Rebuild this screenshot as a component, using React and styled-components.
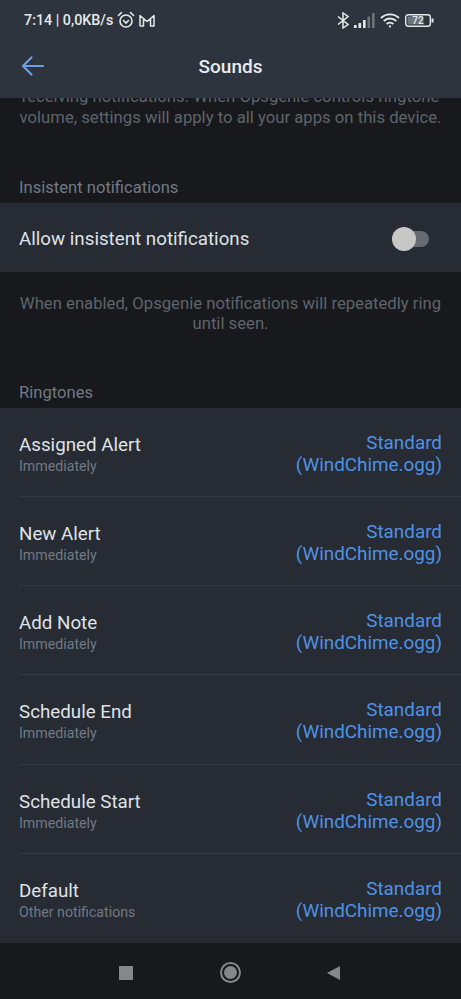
import React from "react"
import styled, { createGlobalStyle } from 'styled-components'

const Global = createGlobalStyle`
html,body{
  margin:0;
  padding:0;
  background:#17191d;
}
*{box-sizing:border-box;}
`

const Screen = styled.div`
width:461px;
height:999px;
display:flex;
flex-direction:column;
overflow:hidden;
font-family:Roboto,"Liberation Sans",sans-serif;
background:#17191d;
`

const Header = styled.header`
height:98px;
flex:none;
background:#2e343d;
display:flex;
flex-direction:column;
position:relative;
z-index:2;
`

const StatusBar = styled.div`
height:40px;
flex:none;
padding:0 27px 0 24px;
display:flex;
align-items:center;
justify-content:space-between;
color:#e6e8ea;
font-size:14.3px;
font-weight:500;
`

const StatusGroup = styled.div`
display:flex;
align-items:center;
gap:${props => props.gap || 4}px;
`

const TitleBar = styled.div`
flex:1;
display:flex;
align-items:center;
padding:0 21px 6px;
position:relative;
`

const Title = styled.div`
position:absolute;
left:0;
right:0;
text-align:center;
color:#e9ebee;
font-size:19px;
font-weight:500;
`

const Content = styled.main`
flex:1;
min-height:0;
overflow:hidden;
display:flex;
flex-direction:column;
`

const Hint = styled.p`
flex:none;
margin:${props => props.top}px 0 0;
padding:0 19px;
text-align:center;
color:#5f646b;
font-size:16.7px;
line-height:${props => props.lh || 20}px;
`

const SectionLabel = styled.div`
flex:none;
margin-top:${props => props.top}px;
height:32px;
padding:0 19px 6px;
display:flex;
align-items:flex-end;
color:#717985;
font-size:16.6px;
`

const Card = styled.section`
flex:none;
background:#272b33;
`

const ToggleRow = styled.div`
height:69px;
padding:3px 32px 0 19px;
display:flex;
align-items:center;
justify-content:space-between;
color:#dfe2e6;
font-size:18.75px;
`

const Switch = styled.div`
width:37px;
height:16px;
border-radius:8px;
background:#666b73;
position:relative;
`

const Thumb = styled.div`
width:24px;
height:24px;
border-radius:50%;
background:#c7c7c5;
position:absolute;
left:0;
top:-4px;
`

const RingRow = styled.div`
height:89.17px;
margin-left:19px;
padding:0 19px 0 0;
display:flex;
justify-content:space-between;
align-items:flex-start;
border-bottom:${props => props.last ? 'none' : '1px solid #343840'};
`

const RingName = styled.div`
padding-top:25px;
`

const Name = styled.div`
color:#dfe2e6;
font-size:18.75px;
line-height:24px;
`

const Sub = styled.div`
color:#717985;
font-size:14.2px;
line-height:20px;
margin-top:-1px;
`

const Tone = styled.div`
padding-top:24px;
text-align:right;
color:#4f92e4;
font-size:18.85px;
line-height:22px;
`

const NavBar = styled.nav`
height:56px;
flex:none;
background:#17191d;
display:grid;
grid-template-columns:repeat(3,auto);
justify-content:start;
align-items:center;
padding:3px 0 0 119px;
gap:86px;
`

const Stop = styled.div`
width:14px;
height:14px;
background:#85878b;
`

const HomeBtn = styled.div`
width:21px;
height:21px;
margin-left:1px;
border-radius:50%;
border:2px solid #85878b;
display:flex;
align-items:center;
justify-content:center;
&::after{
content:'';
width:13px;
height:13px;
border-radius:50%;
background:#85878b;
}
`

const Arrow = () => (
  <svg width="24" height="22" viewBox="0 0 24 22" fill="none" stroke="#6a9fe6" strokeWidth="2.2" strokeLinecap="round" strokeLinejoin="round">
    <path d="M22 11H2M10.5 2.5L2 11l8.5 8.5" />
  </svg>
)

const Alarm = () => (
  <svg width="18" height="18" viewBox="0 0 18 18" fill="none" stroke="#e6e8ea" strokeWidth="1.6" strokeLinecap="round">
    <circle cx="9" cy="10" r="6" />
    <path d="M1.5 4.5L4.5 1.5M16.5 4.5L13.5 1.5M6.5 9.5L9 12l2.5-2.5" />
  </svg>
)

const Gmail = () => (
  <svg width="16" height="13" viewBox="0 0 16 13" fill="none" stroke="#e6e8ea" strokeWidth="1.5" strokeLinejoin="round">
    <path d="M1 12V1.5l7 6 7-6V12h-3.5V5M1 12h3.5V5" />
  </svg>
)

const Bluetooth = () => (
  <svg width="12" height="17" viewBox="0 0 12 17" fill="none" stroke="#e6e8ea" strokeWidth="1.5">
    <path d="M1 4.5l10 8L6 16V1l5 3.5-10 8" />
  </svg>
)

const Signal = () => (
  <svg width="21" height="15" viewBox="0 0 21 15">
    <rect x="0" y="12" width="2.6" height="3" fill="#e6e8ea" />
    <rect x="4.5" y="10" width="2.6" height="5" fill="#e6e8ea" />
    <rect x="9" y="7" width="2.6" height="8" fill="#e6e8ea" />
    <rect x="13.5" y="3.5" width="2.6" height="11.5" fill="#6f747b" />
    <rect x="18" y="0" width="2.6" height="15" fill="#6f747b" />
  </svg>
)

const Wifi = () => (
  <svg width="20" height="15" viewBox="0 0 20 15" fill="none" stroke="#e6e8ea" strokeWidth="1.9">
    <path d="M1 5a13 13 0 0 1 18 0M3.8 8a9 9 0 0 1 12.4 0M6.6 11a5 5 0 0 1 6.8 0" />
    <circle cx="10" cy="13.4" r="1.1" fill="#e6e8ea" stroke="none" />
  </svg>
)

const Battery = () => (
  <svg width="29" height="13" viewBox="0 0 29 13">
    <rect x="0.7" y="0.7" width="24.6" height="11.6" rx="2.5" fill="none" stroke="#e6e8ea" strokeWidth="1.4" />
    <rect x="2.5" y="2.5" width="16" height="8" fill="#6f747b" />
    <rect x="26.5" y="4.5" width="2" height="4" fill="#e6e8ea" />
    <text x="13" y="10" textAnchor="middle" fontSize="10" fontWeight="500" fontFamily="Roboto" fill="#e6e8ea">72</text>
  </svg>
)

const Back = () => (
  <svg width="16" height="16" viewBox="0 0 16 16" fill="#85878b">
    <path d="M13 1v14L0 8z" />
  </svg>
)

const rows = [
  { name: 'Assigned Alert', sub: 'Immediately' },
  { name: 'New Alert', sub: 'Immediately' },
  { name: 'Add Note', sub: 'Immediately' },
  { name: 'Schedule End', sub: 'Immediately' },
  { name: 'Schedule Start', sub: 'Immediately' },
  { name: 'Default', sub: 'Other notifications' },
]

const App = () => {
  return (
    <>
      <Global />
      <Screen>
        <Header>
          <StatusBar>
            <StatusGroup>
              <span>7:14 | 0,0KB/s</span>
              <Alarm />
              <Gmail />
            </StatusGroup>
            <StatusGroup gap={5}>
              <Bluetooth />
              <Signal />
              <Wifi />
              <Battery />
            </StatusGroup>
          </StatusBar>
          <TitleBar>
            <Arrow />
            <Title>Sounds</Title>
          </TitleBar>
        </Header>
        <Content>
          <Hint top={-11} lh={20.5}>
            receiving notifications. When Opsgenie controls ringtone volume, settings will apply to all your apps on this device.
          </Hint>
          <SectionLabel top={43}>Insistent notifications</SectionLabel>
          <Card>
            <ToggleRow>
              Allow insistent notifications
              <Switch><Thumb /></Switch>
            </ToggleRow>
          </Card>
          <Hint top={22}>When enabled, Opsgenie notifications will repeatedly ring until seen.</Hint>
          <SectionLabel top={42}>Ringtones</SectionLabel>
          <Card>
            {rows.map((r, i) => (
              <RingRow key={r.name} last={i === rows.length - 1}>
                <RingName>
                  <Name>{r.name}</Name>
                  <Sub>{r.sub}</Sub>
                </RingName>
                <Tone>Standard<br />(WindChime.ogg)</Tone>
              </RingRow>
            ))}
          </Card>
        </Content>
        <NavBar>
          <Stop />
          <HomeBtn />
          <Back />
        </NavBar>
      </Screen>
    </>
  )
}

export default App
